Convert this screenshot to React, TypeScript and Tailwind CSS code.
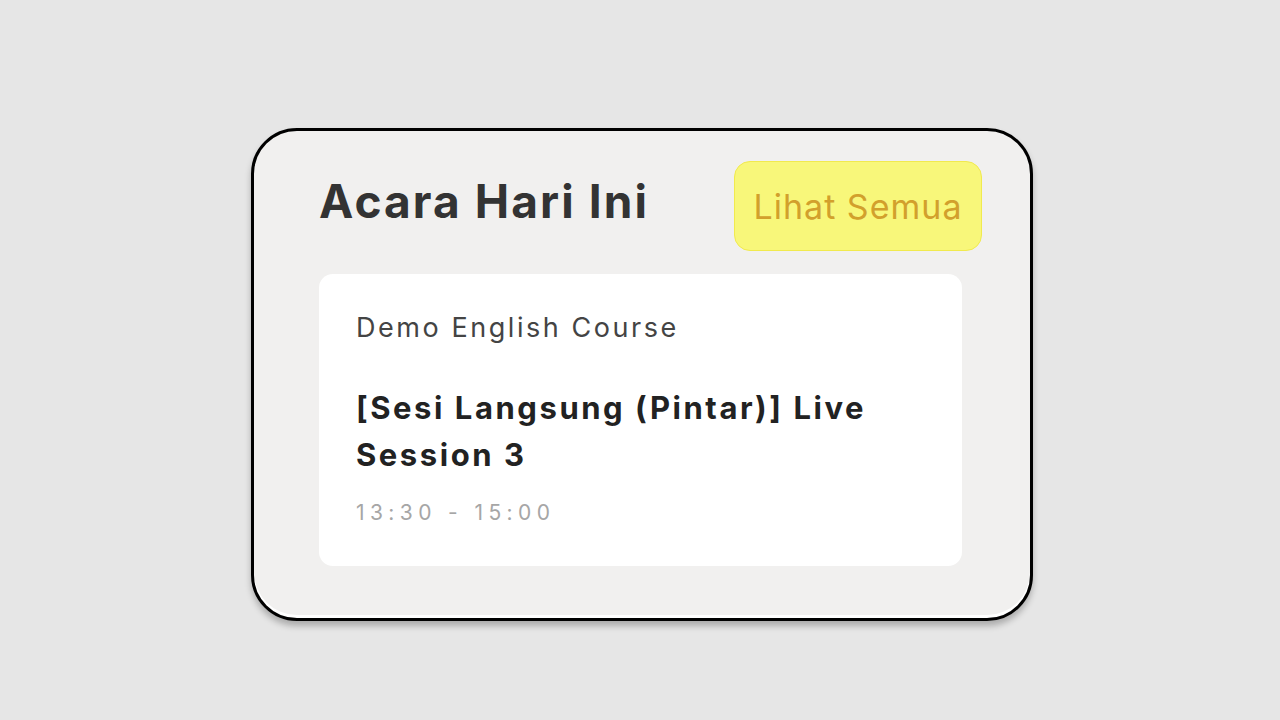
export default function App() {
  return (
    <div className="min-h-screen w-full bg-[#e6e6e6] flex items-start justify-center pt-[128px]" style={{ fontFamily: "Inter, 'Noto Sans', sans-serif" }}>
      <div className="ml-[4px] w-[782px] h-[493px] rounded-[46px] border-[3px] border-black bg-[#f1f0ef] shadow-[0_5px_6px_rgba(0,0,0,0.25),inset_0_-3px_0_#ffffff] pl-[65px] pr-[48px] pt-[30px]">
        {/* Header */}
        <div className="flex items-center justify-between h-[90px] mb-[23px]">
          <h2 className="text-[46px] font-bold text-[#333333] tracking-[2.1px] -mt-[10px]">Acara Hari Ini</h2>
          <button className="w-[248px] h-[90px] rounded-[16px] bg-[#f8f77a] border border-[#f1ea4e] text-[#d2a02c] text-[34px] tracking-[1px] font-normal flex items-center justify-center">
            Lihat Semua
          </button>
        </div>

        {/* Event card */}
        <div className="mr-[20px] h-[292px] rounded-[14px] bg-white pl-[37px] pt-[36px]">
          <p className="text-[27px] leading-[36px] tracking-[2.55px] text-[#444444]">Demo English Course</p>
          <h3 className="mt-[38px] text-[31px] leading-[47px] font-bold tracking-[2.55px] text-[#222222] w-[560px]">
            [Sesi Langsung (Pintar)] Live Session 3
          </h3>
          <p className="mt-[19px] text-[21px] tracking-[5.4px] text-[#a6a6a6]">13:30 - 15:00</p>
        </div>
      </div>
    </div>
  );
}
